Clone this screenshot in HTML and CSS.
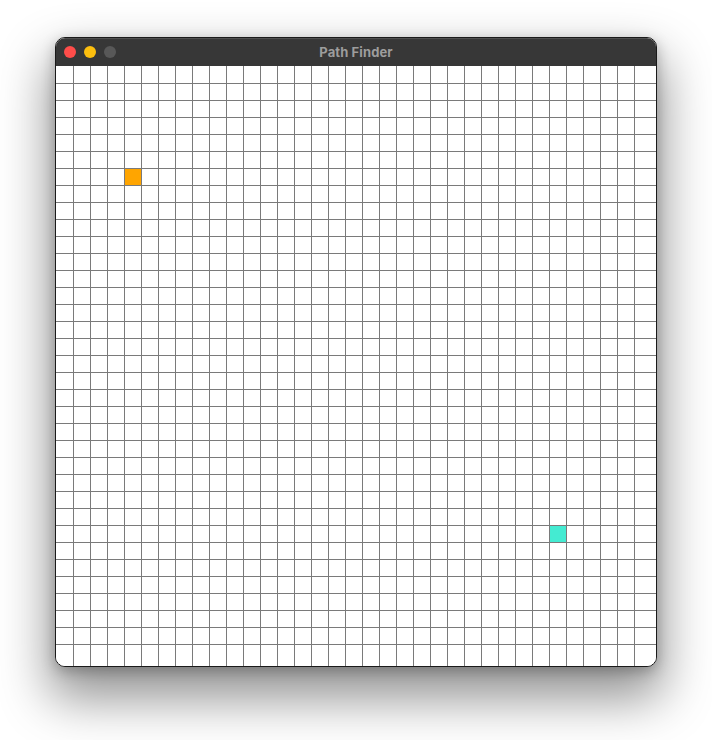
FILE: index.html
```html
<!DOCTYPE html>
<html lang="en">
<head>
<meta charset="utf-8">
<title>Path Finder</title>
<link rel="stylesheet" href="styles.css">
</head>
<body>
<div class="window">
  <div class="titlebar">
    <div class="lights">
      <span class="light close"></span>
      <span class="light minimize"></span>
      <span class="light zoom"></span>
    </div>
    <div class="title">Path Finder</div>
  </div>
  <div class="board">
    <div class="node start"></div>
    <div class="node end"></div>
  </div>
</div>
</body>
</html>
```

FILE: styles.css
```css
html, body {
  margin: 0;
  padding: 0;
  background: #ffffff;
}
body {
  width: 712px;
  height: 740px;
  padding: 37px 0 0 55px;
  box-sizing: border-box;
  font-family: "Inter", "Noto Sans", "Liberation Sans", sans-serif;
}
.window {
  width: 600px;
  border: 1px solid #1a1a1a;
  border-radius: 10px;
  overflow: hidden;
  background: #ffffff;
  box-shadow: 0 26px 50px 6px rgba(0, 0, 0, 0.42), 0 4px 14px rgba(0, 0, 0, 0.25);
}
.titlebar {
  height: 28px;
  background: #373737;
  display: flex;
  align-items: center;
  position: relative;
  box-shadow: inset 0 1px 0 rgba(255, 255, 255, 0.12);
}
.lights {
  display: flex;
  gap: 8px;
  padding-left: 8px;
  position: relative;
  z-index: 1;
}
.light {
  width: 12px;
  height: 12px;
  border-radius: 50%;
  display: block;
}
.close { background: #ff4d4a; }
.minimize { background: #fdbf0e; }
.zoom { background: #585858; }
.title {
  position: absolute;
  left: 0;
  right: 0;
  top: 0;
  bottom: 0;
  display: flex;
  align-items: center;
  justify-content: center;
  color: #9d9d9d;
  font-size: 13px;
  font-weight: 700;
  letter-spacing: 0.1px;
}
.board {
  width: 600px;
  height: 600px;
  display: grid;
  grid-template-columns: repeat(35, 17px);
  grid-template-rows: repeat(35, 17px);
  background-color: #ffffff;
  background-image:
    repeating-linear-gradient(90deg, #7a7a7a 0 1px, transparent 1px 17px),
    repeating-linear-gradient(180deg, #7a7a7a 0 1px, transparent 1px 17px);
  background-size: 578px 600px, 600px 578px;
  background-position: 17px 0, 0 17px;
  background-repeat: no-repeat;
}
.node {
  width: 16px;
  height: 16px;
  justify-self: end;
  align-self: end;
}
.start {
  grid-column: 5;
  grid-row: 7;
  background: #ffa500;
}
.end {
  grid-column: 30;
  grid-row: 28;
  background: #44ebd2;
}
```
